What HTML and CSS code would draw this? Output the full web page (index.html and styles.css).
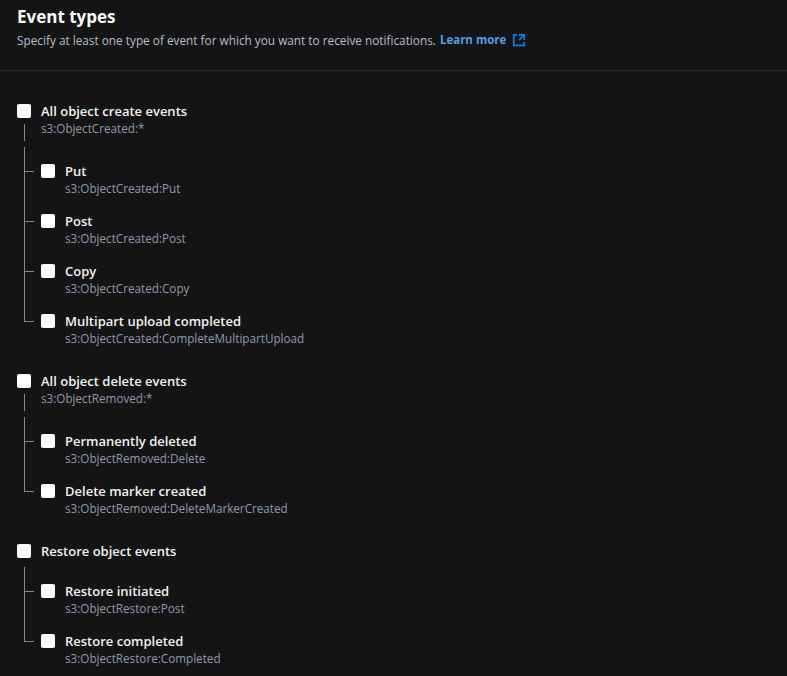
FILE: index.html
```html
<!DOCTYPE html>
<html>
<head>
<meta charset="utf-8">
<link rel="stylesheet" href="styles.css">
</head>
<body>
<div class="panel">
  <header class="head">
    <h2 class="title">Event types</h2>
    <p class="desc">Specify at least one type of event for which you want to receive notifications. <a class="link" href="#">Learn more</a><svg class="ext" viewBox="0 0 16 16" width="14" height="14" aria-hidden="true"><path d="M14 8.01v-6H8M14.02 2 8 8.02M6 2.01H2v12h12V10" fill="none" stroke="currentColor" stroke-width="2"/></svg></p>
  </header>
  <div class="list">
    <div class="group">
      <div class="row"><span class="box"></span><span class="label">All object create events</span></div>
      <div class="sub psub">s3:ObjectCreated:*</div>
      <div class="children">
        <div class="child"><div class="row"><span class="box"></span><span class="label">Put</span></div><div class="sub">s3:ObjectCreated:Put</div></div>
        <div class="child"><div class="row"><span class="box"></span><span class="label">Post</span></div><div class="sub">s3:ObjectCreated:Post</div></div>
        <div class="child"><div class="row"><span class="box"></span><span class="label">Copy</span></div><div class="sub">s3:ObjectCreated:Copy</div></div>
        <div class="child"><div class="row"><span class="box"></span><span class="label">Multipart upload completed</span></div><div class="sub">s3:ObjectCreated:CompleteMultipartUpload</div></div>
      </div>
    </div>
    <div class="group">
      <div class="row"><span class="box"></span><span class="label">All object delete events</span></div>
      <div class="sub psub">s3:ObjectRemoved:*</div>
      <div class="children">
        <div class="child"><div class="row"><span class="box"></span><span class="label">Permanently deleted</span></div><div class="sub">s3:ObjectRemoved:Delete</div></div>
        <div class="child"><div class="row"><span class="box"></span><span class="label">Delete marker created</span></div><div class="sub">s3:ObjectRemoved:DeleteMarkerCreated</div></div>
      </div>
    </div>
    <div class="group">
      <div class="row"><span class="box"></span><span class="label">Restore object events</span></div>
      <div class="children nosub">
        <div class="child"><div class="row"><span class="box"></span><span class="label">Restore initiated</span></div><div class="sub">s3:ObjectRestore:Post</div></div>
        <div class="child"><div class="row"><span class="box"></span><span class="label">Restore completed</span></div><div class="sub">s3:ObjectRestore:Completed</div></div>
      </div>
    </div>
  </div>
</div>
</body>
</html>
```
FILE: styles.css
```css
html, body {
  margin: 0;
  background: #141414;
}
body {
  font-family: "Open Sans", "Noto Sans", sans-serif;
  color: #eceef0;
  height: 676px;
  overflow: hidden;
}
.head {
  padding: 6px 17px 20px;
  border-bottom: 1px solid #2c2c2c;
}
.title {
  margin: 0;
  font-size: 17px;
  line-height: 22px;
  font-weight: 700;
  color: #ffffff;
}
.desc {
  margin: 2px 0 0;
  font-size: 11.8px;
  line-height: 20px;
  color: #b6bec9;
  display: flex;
  align-items: center;
}
.link {
  color: #539fe5;
  font-weight: 700;
  font-size: 11.5px;
  text-decoration: none;
  margin-left: 4px;
}
.ext {
  color: #0e7ad8;
  margin-left: 6px;
}
.list {
  padding: 30px 17px 0;
}
.group + .group {
  margin-top: 26px;
}
.row {
  display: flex;
  align-items: center;
  gap: 10px;
  height: 20px;
}
.box {
  width: 14px;
  height: 14px;
  background: #ffffff;
  border-radius: 2px;
  flex: none;
}
.label {
  font-size: 13px;
  font-weight: 600;
  color: #f2f3f3;
  white-space: nowrap;
}
.sub {
  font-size: 11.7px;
  line-height: 14px;
  color: #8d99a8;
  padding-left: 24px;
  white-space: nowrap;
}
.psub {
  position: relative;
  margin-bottom: 12px;
}
.psub::before {
  content: "";
  position: absolute;
  left: 7px;
  top: 3px;
  height: 17px;
  border-left: 1px solid #7d8998;
}
.children {
  margin-left: 7px;
}
.children.nosub {
  margin-top: 6px;
}
.child {
  position: relative;
  padding: 16px 0 0 17px;
}
.child:first-child {
  padding-top: 14px;
}
.child::before {
  content: "";
  position: absolute;
  left: 0;
  top: 0;
  bottom: 0;
  border-left: 1px solid #7d8998;
}
.child:last-child::before {
  bottom: auto;
  height: 26px;
}
.child::after {
  content: "";
  position: absolute;
  left: 0;
  top: 26px;
  width: 10px;
  border-top: 1px solid #7d8998;
}
.child:first-child::after {
  top: 24px;
}
.child:first-child:last-child::before {
  height: 24px;
}
```
